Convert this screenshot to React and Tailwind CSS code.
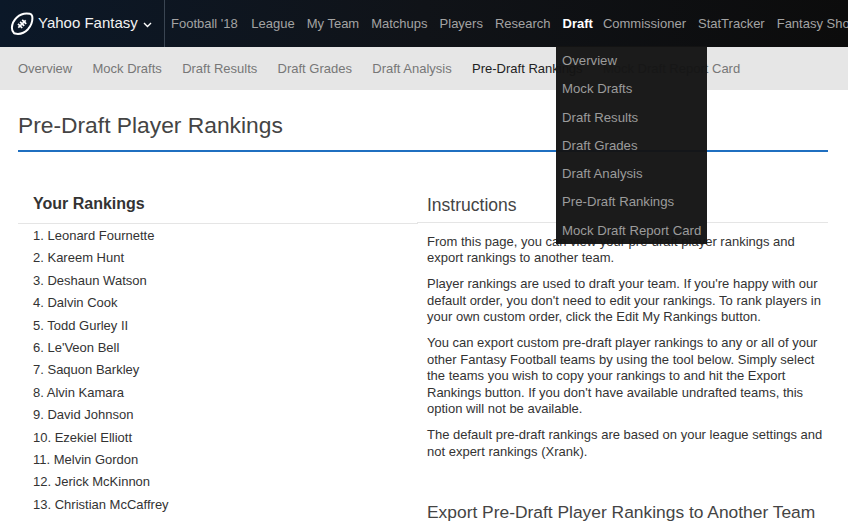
import React from 'react'

const mainNav = ["Football '18", 'League', 'My Team', 'Matchups', 'Players', 'Research', 'Draft', 'Commissioner', 'StatTracker', 'Fantasy Shop']
const subNav = ['Overview', 'Mock Drafts', 'Draft Results', 'Draft Grades', 'Draft Analysis', 'Pre-Draft Rankings', 'Mock Draft Report Card']
const players = ['Leonard Fournette', 'Kareem Hunt', 'Deshaun Watson', 'Dalvin Cook', 'Todd Gurley II', "Le'Veon Bell", 'Saquon Barkley', 'Alvin Kamara', 'David Johnson', 'Ezekiel Elliott', 'Melvin Gordon', 'Jerick McKinnon', 'Christian McCaffrey']

const Football = () => (
    <svg width="24" height="24" viewBox="0 0 24 24" fill="none" stroke="white" className="shrink-0">
        <path d="M3.800 20.800c-1.300-1.300-1.900-3-1.900-5C2 12 4 8 6.800 5.400 10.400 2.200 15.500.9 19.800 1.800c1.300.3 2 1 2.400 2.300.7 4.400-1 9.500-4.200 13.100-3.600 3.800-9 5.200-13 4.400-.5-.1-.9-.4-1.200-.8Z" strokeWidth="2" />
        <path d="M8.300 15.700l7.400-7.400M8 11.800l4.200 4.200M10.100 9.800l4.100 4.100M12.200 7.800l4 4" strokeWidth="1.700" />
    </svg>
)

const navClass = (item) => {
    if (item === 'Draft') return '-mr-[2px] font-bold text-white'
    if (item === "Football '18") return 'mr-[1.500px]'
    return ''
}

const App = () => {
    return (
        <div className="relative h-[521px] w-[848px] overflow-hidden bg-white font-['Liberation_Sans',Arial,sans-serif] text-[#333]">
            <header className="flex h-[47px] items-center overflow-hidden whitespace-nowrap bg-gradient-to-r from-[#0b1828] via-[#101318] to-[#0c0c0c]">
                <div className="flex h-full w-[165px] shrink-0 items-center border-r border-[#3a4552] pl-[10px]">
                    <Football />
                    <span className="ml-[4px] text-[15px] text-[#f2f2f2]">Yahoo Fantasy</span>
                    <svg width="9" height="6" viewBox="0 0 9 6" fill="none" stroke="white" strokeWidth="1.400" className="ml-[5px] mt-[3px]">
                        <path d="M1 1l3.500 3.500L8 1" />
                    </svg>
                </div>
                <nav className="flex gap-[12px] pl-[6px] text-[13px] text-[#a3a3a3]">
                    {mainNav.map((item) => (
                        <span key={item} className={navClass(item)}>{item}</span>
                    ))}
                </nav>
            </header>

            <nav className="flex h-[43px] items-center gap-[20.300px] whitespace-nowrap bg-[#e6e6e6] pl-[18px] text-[13px] text-[#777]">
                {subNav.map((item) => (
                    <span key={item} className={item === 'Pre-Draft Rankings' ? 'text-[#222]' : ''}>{item}</span>
                ))}
            </nav>

            <main className="ml-[18px] w-[810px]">
                <h1 className="h-[62px] border-b-2 border-[#1f6fc0] pt-[21px] text-[22.800px] leading-[28px] text-[#444]">Pre-Draft Player Rankings</h1>
                <div className="flex pt-[40px]">
                    <section className="w-[400px] shrink-0">
                        <h2 className="h-[32px] border-b border-[#e5e5e5] pl-[15px] text-[16px] font-bold leading-[24px]">Your Rankings</h2>
                        <ol className="pl-[15px] pt-[1px] text-[13px]">
                            {players.map((name, i) => (
                                <li key={name} className="h-[22.400px] leading-[22.400px]">{i + 1}. {name}</li>
                            ))}
                        </ol>
                    </section>
                    <section className="flex-1">
                        <h2 className="ml-[-1px] h-[31px] border-b border-[#e5e5e5] pl-[10px] text-[17.500px] leading-[26px] text-[#444]">Instructions</h2>
                        <div className="flex flex-col gap-[9.500px] pl-[9px] pt-[10.500px] text-[13px] leading-[16.500px]">
                            <p>From this page, you can view your pre-draft player rankings and export rankings to another team.</p>
                            <p>Player rankings are used to draft your team. If you're happy with our default order, you don't need to edit your rankings. To rank players in your own custom order, click the Edit My Rankings button.</p>
                            <p>You can export custom pre-draft player rankings to any or all of your other Fantasy Football teams by using the tool below. Simply select the teams you wish to copy your rankings to and hit the Export Rankings button. If you don't have available undrafted teams, this option will not be available.</p>
                            <p>The default pre-draft rankings are based on your league settings and not expert rankings (Xrank).</p>
                        </div>
                        <h2 className="whitespace-nowrap pl-[9px] pt-[39px] text-[17.400px] leading-[26px] text-[#444]">Export Pre-Draft Player Rankings to Another Team</h2>
                    </section>
                </div>
            </main>

            <ul className="absolute left-[556px] top-[46px] h-[198px] w-[151px] whitespace-nowrap bg-[#141414]/[0.97] pl-[6px] pt-[1px] text-[13.200px] text-[#9c9c9c]">
                {subNav.map((item) => (
                    <li key={item} className="h-[28.300px] leading-[28.300px]">{item}</li>
                ))}
            </ul>
        </div>
    )
}

export default App
